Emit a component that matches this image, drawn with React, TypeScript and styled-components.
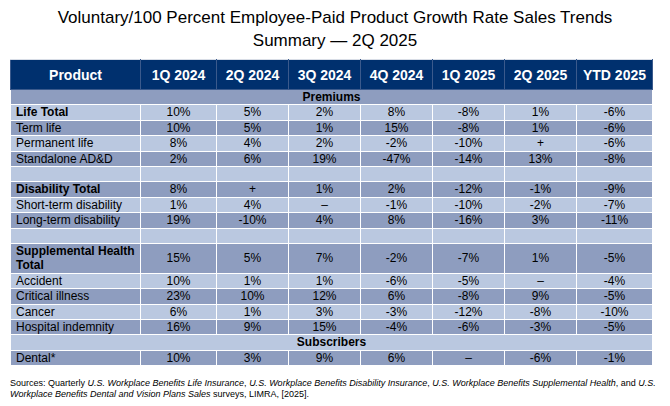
import React from "react";
import styled, { createGlobalStyle } from "styled-components";

const Global = createGlobalStyle`
  html, body { margin: 0; padding: 0; background: #ffffff; }
  body { font-family: "Liberation Sans", Arial, sans-serif; color: #000; }
`;

const Page = styled.div`
  width: 670px;
  height: 406px;
  display: flex;
  flex-direction: column;
  padding-top: 6px;
  box-sizing: border-box;
`;

const Title = styled.h1`
  margin: 0 0 7px 0;
  font-size: 17px;
  line-height: 23px;
  font-weight: normal;
  text-align: center;
  color: #000;
`;

const Table = styled.table`
  margin-left: 10px;
  width: 642px;
  table-layout: fixed;
  border-collapse: collapse;
  font-size: 12px;
`;

const HeadCell = styled.th`
  background: #00306e;
  color: #ffffff;
  font-size: 14px;
  font-weight: bold;
  height: 29px;
  padding: 0;
  text-align: center;
  border: 1px solid #3b5a8c;
  border-top-color: #d8dde6;
`;

const Row = styled.tr<{ $dark: boolean }>`
  background: ${(p) => (p.$dark ? "#8e9dbf" : "#bac8e0")};
`;

const Cell = styled.td<{ $bold?: boolean; $name?: boolean }>`
  border: 1px solid #ffffff;
  padding: 0 ${(p) => (p.$name ? "4px 0 5px" : "0")};
  line-height: 14.4px;
  height: 14.4px;
  text-align: ${(p) => (p.$name ? "left" : "center")};
  font-weight: ${(p) => (p.$bold ? "bold" : "normal")};
  white-space: ${(p) => (p.$name ? "normal" : "nowrap")};
`;

const SectionCell = styled.td`
  border: 1px solid #ffffff;
  padding: 0;
  line-height: 14.4px;
  height: 14.4px;
  text-align: center;
  font-weight: bold;
`;

const Footer = styled.p`
  margin: 12px 0 0 10px;
  font-size: 9px;
  line-height: 11px;
  color: #000;
`;

type DataRow =
  | { kind: "section"; label: string }
  | { kind: "empty" }
  | { kind: "data"; name: string; bold?: boolean; values: string[] };

const headers = ["Product", "1Q 2024", "2Q 2024", "3Q 2024", "4Q 2024", "1Q 2025", "2Q 2025", "YTD 2025"];
const widths = [130, 76, 72, 72, 72, 72, 72, 76];

const rows: DataRow[] = [
  { kind: "section", label: "Premiums" },
  { kind: "data", name: "Life Total", bold: true, values: ["10%", "5%", "2%", "8%", "-8%", "1%", "-6%"] },
  { kind: "data", name: "Term life", values: ["10%", "5%", "1%", "15%", "-8%", "1%", "-6%"] },
  { kind: "data", name: "Permanent life", values: ["8%", "4%", "2%", "-2%", "-10%", "+", "-6%"] },
  { kind: "data", name: "Standalone AD&D", values: ["2%", "6%", "19%", "-47%", "-14%", "13%", "-8%"] },
  { kind: "empty" },
  { kind: "data", name: "Disability Total", bold: true, values: ["8%", "+", "1%", "2%", "-12%", "-1%", "-9%"] },
  { kind: "data", name: "Short-term disability", values: ["1%", "4%", "–", "-1%", "-10%", "-2%", "-7%"] },
  { kind: "data", name: "Long-term disability", values: ["19%", "-10%", "4%", "8%", "-16%", "3%", "-11%"] },
  { kind: "empty" },
  { kind: "data", name: "Supplemental Health Total", bold: true, values: ["15%", "5%", "7%", "-2%", "-7%", "1%", "-5%"] },
  { kind: "data", name: "Accident", values: ["10%", "1%", "1%", "-6%", "-5%", "–", "-4%"] },
  { kind: "data", name: "Critical illness", values: ["23%", "10%", "12%", "6%", "-8%", "9%", "-5%"] },
  { kind: "data", name: "Cancer", values: ["6%", "1%", "3%", "-3%", "-12%", "-8%", "-10%"] },
  { kind: "data", name: "Hospital indemnity", values: ["16%", "9%", "15%", "-4%", "-6%", "-3%", "-5%"] },
  { kind: "section", label: "Subscribers" },
  { kind: "data", name: "Dental*", values: ["10%", "3%", "9%", "6%", "–", "-6%", "-1%"] },
];

export default function App() {
  return (
    <Page>
      <Global />
      <Title>
        Voluntary/100 Percent Employee-Paid Product Growth Rate Sales Trends
        <br />
        Summary — 2Q 2025
      </Title>
      <Table>
        <colgroup>
          {widths.map((w, i) => (
            <col key={i} style={{ width: w }} />
          ))}
        </colgroup>
        <thead>
          <tr>
            {headers.map((h) => (
              <HeadCell key={h}>{h}</HeadCell>
            ))}
          </tr>
        </thead>
        <tbody>
          {rows.map((r, i) => {
            const dark = i % 2 === 0;
            if (r.kind === "section") {
              return (
                <Row key={i} $dark={dark}>
                  <SectionCell colSpan={8}>{r.label}</SectionCell>
                </Row>
              );
            }
            if (r.kind === "empty") {
              return (
                <Row key={i} $dark={dark}>
                  {widths.map((_, j) => (
                    <Cell key={j} $name={j === 0} />
                  ))}
                </Row>
              );
            }
            return (
              <Row key={i} $dark={dark}>
                <Cell $name $bold={r.bold}>
                  {r.name}
                </Cell>
                {r.values.map((v, j) => (
                  <Cell key={j}>{v}</Cell>
                ))}
              </Row>
            );
          })}
        </tbody>
      </Table>
      <Footer>
        Sources: Quarterly <i>U.S. Workplace Benefits Life Insurance</i>, <i>U.S. Workplace Benefits Disability Insurance</i>,{" "}
        <i>U.S. Workplace Benefits Supplemental Health</i>, and <i>U.S.</i>
        <br />
        <i>Workplace Benefits Dental and Vision Plans Sales</i> surveys, LIMRA, [2025].
      </Footer>
    </Page>
  );
}
